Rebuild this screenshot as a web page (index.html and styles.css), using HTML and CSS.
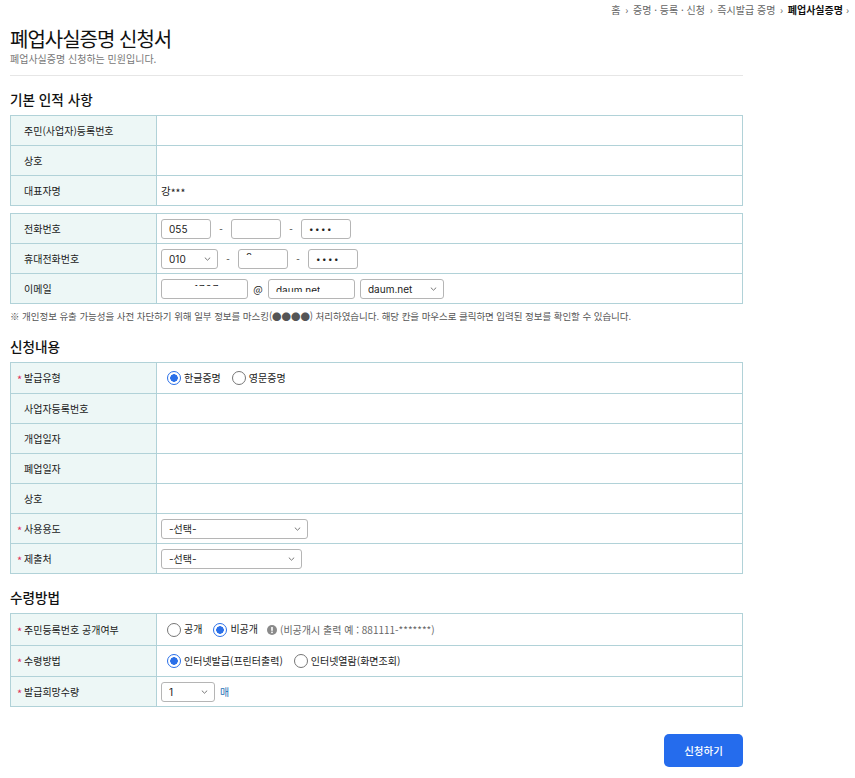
FILE: index.html
```html
<!DOCTYPE html>
<html lang="ko">
<head>
<meta charset="utf-8">
<title>폐업사실증명 신청서</title>
<link rel="stylesheet" href="styles.css">
</head>
<body>
<nav class="crumbs">
  <span>홈</span><i>›</i><span>증명 · 등록 · 신청</span><i>›</i><span>즉시발급 증명</span><i>›</i><b>폐업사실증명</b><i class="tail">›</i>
</nav>
<main class="page">
  <header class="head">
    <h1>폐업사실증명 신청서</h1>
    <p>폐업사실증명 신청하는 민원입니다.</p>
  </header>

  <h2 class="sec sec-first">기본 인적 사항</h2>
  <table class="form">
    <tr><th><span class="lb">주민(사업자)등록번호</span></th><td></td></tr>
    <tr><th><span class="lb">상호</span></th><td></td></tr>
    <tr><th><span class="lb">대표자명</span></th><td class="plain">강<span class="ast">***</span></td></tr>
  </table>

  <table class="form second">
    <tr><th><span class="lb">전화번호</span></th><td><div class="line">
      <span class="field w50">055</span><em>-</em><span class="field w50"></span><em>-</em><span class="field w50 dots">••••</span>
    </div></td></tr>
    <tr><th><span class="lb">휴대전화번호</span></th><td><div class="line">
      <select class="sel w57"><option>010</option></select><em>-</em><span class="field w50"><span class="cut cut-a">2</span></span><em>-</em><span class="field w50 dots">••••</span>
    </div></td></tr>
    <tr><th><span class="lb">이메일</span></th><td><div class="line tight">
      <span class="field w87"><span class="cut cut-b">1707</span></span><u>@</u><span class="field w87"><span class="cut cut-c">daum.net</span></span><select class="sel w84"><option>daum.net</option></select>
    </div></td></tr>
  </table>
  <p class="note">※ 개인정보 유출 가능성을 사전 차단하기 위해 일부 정보를 마스킹(●●●●) 처리하였습니다. 해당 칸을 마우스로 클릭하면 입력된 정보를 확인할 수 있습니다.</p>

  <h2 class="sec sec-two">신청내용</h2>
  <table class="form">
    <tr class="r31"><th class="req"><span class="lb"><s>*</s>발급유형</span></th><td><div class="radios">
      <label><input type="radio" name="a" checked><span>한글증명</span></label><label><input type="radio" name="a"><span>영문증명</span></label>
    </div></td></tr>
    <tr><th><span class="lb">사업자등록번호</span></th><td></td></tr>
    <tr><th><span class="lb">개업일자</span></th><td></td></tr>
    <tr><th><span class="lb">폐업일자</span></th><td></td></tr>
    <tr><th><span class="lb">상호</span></th><td></td></tr>
    <tr><th class="req"><span class="lb"><s>*</s>사용용도</span></th><td><select class="sel w147"><option>-선택-</option></select></td></tr>
    <tr><th class="req"><span class="lb"><s>*</s>제출처</span></th><td><select class="sel w141"><option>-선택-</option></select></td></tr>
  </table>

  <h2 class="sec sec-three">수령방법</h2>
  <table class="form">
    <tr class="r32"><th class="req"><span class="lb"><s>*</s>주민등록번호 공개여부</span></th><td><div class="radios">
      <label><input type="radio" name="b"><span>공개</span></label><label><input type="radio" name="b" checked><span>비공개</span></label>
      <span class="hint"><svg class="info" viewBox="0 0 10 10" width="10" height="10"><circle cx="5" cy="5" r="5" fill="#8a8a8a"/><rect x="4.2" y="2" width="1.6" height="3.8" fill="#fff"/><rect x="4.2" y="6.6" width="1.6" height="1.5" fill="#fff"/></svg>(비공개시 출력 예 : 881111-<span class="ast">*******</span>)</span>
    </div></td></tr>
    <tr class="r31"><th class="req"><span class="lb"><s>*</s>수령방법</span></th><td><div class="radios">
      <label><input type="radio" name="c" checked><span>인터넷발급(프린터출력)</span></label><label><input type="radio" name="c"><span>인터넷열람(화면조회)</span></label>
    </div></td></tr>
    <tr><th class="req"><span class="lb"><s>*</s>발급희망수량</span></th><td><div class="line qty"><select class="sel w54"><option>1</option></select><span class="unit">매</span></div></td></tr>
  </table>

  <div class="actions"><button class="submit" type="button">신청하기</button></div>
</main>
</body>
</html>
```
FILE: styles.css
```css
* { box-sizing: border-box; }
html, body { margin: 0; padding: 0; background: #fff; }
body {
  font-family: "Noto Sans CJK KR", "Noto Sans", sans-serif;
  font-size: 10px;
  color: #1a1a1a;
  height: 778px;
  overflow: hidden;
}
.crumbs {
  display: flex;
  justify-content: flex-end;
  align-items: center;
  height: 18px;
  padding-right: 6px;
  font-size: 10px;
  color: #666;
  white-space: nowrap;
}
.crumbs i { font-style: normal; margin: 0 4.7px; font-size: 10px; }
.crumbs b { color: #111; font-weight: 700; }
.crumbs .tail { margin: 0 0 0 3px; }
.page { width: 743px; padding-left: 10px; }
.head { height: 58px; border-bottom: 1px solid #e6e6e6; padding-top: 9px; }
.head h1 { margin: 0; font-size: 20px; line-height: 24px; font-weight: 400; letter-spacing: -1px; color: #111; }
.head p { margin: 1px 0 0; font-size: 10px; line-height: 14px; color: #777; }
.sec { margin: 0; font-size: 13.6px; font-weight: 500; line-height: 20px; color: #111; }
.sec-first { margin-top: 13px; margin-bottom: 6px; }
.sec-two { margin-top: 13px; margin-bottom: 6px; }
.sec-three { margin-top: 13px; margin-bottom: 6px; }
.form { width: 733px; border-collapse: collapse; table-layout: fixed; }
.form.second { margin-top: 7px; }
.form tr { height: 30px; }
.form tr.r31 { height: 31px; }
.form tr.r32 { height: 32px; }
.form th, .form td { border: 1px solid #b1d2d8; padding: 0 4px; vertical-align: middle; }
.form th {
  width: 146px;
  background: #edf7f6;
  text-align: left;
  font-weight: 400;
  font-size: 10px;
  padding-left: 13px;
  color: #1a1a1a;
}
.form th.req { padding-left: 6px; }
.lb { display: block; margin-bottom: 1px; }
.form th s { text-decoration: none; color: #e0335e; display: inline-block; width: 7px; font-size: 11px; line-height: 1; vertical-align: -2px; }
.ast { vertical-align: -2px; line-height: 1; }
.plain { font-size: 10.5px; }
.line { display: flex; align-items: center; }
.line em { font-style: normal; width: 20px; text-align: center; color: #444; }
.line.tight u { text-decoration: none; width: 20px; text-align: center; font-size: 10px; }
.line.tight .sel { margin-left: 5px; }
.field {
  display: block;
  height: 20px;
  border: 1px solid #b5b5b5;
  border-radius: 3px;
  background: #fff;
  padding: 0 7px;
  font-family: Inter, "Noto Sans CJK KR", sans-serif;
  font-size: 10px;
  line-height: 18px;
  color: #222;
  position: relative;
  overflow: hidden;
}
.w50 { width: 50px; }
.w87 { width: 87px; }
.dots { letter-spacing: 1.5px; font-size: 8px; }
.cut { position: absolute; left: 7px; top: 1px; overflow: hidden; display: block; }
.cut-a { height: 4px; line-height: 13px; }
.cut-b { left: 32px; top: 3px; height: 3px; line-height: 13px; letter-spacing: 1px; }
.cut-c { left: 7px; top: 2px; height: 10px; line-height: 17px; }
.sel {
  display: block;
  height: 20px;
  appearance: none;
  -webkit-appearance: none;
  border: 1px solid #b5b5b5;
  border-radius: 3px;
  background: #fff url("data:image/svg+xml,%3Csvg xmlns='http://www.w3.org/2000/svg' width='7' height='4' viewBox='0 0 7 4'%3E%3Cpath d='M.8.6l2.7 2.6L6.2.6' fill='none' stroke='%23666' stroke-width='.9'/%3E%3C/svg%3E") no-repeat right 6px center;
  padding: 0 7px;
  font-family: Inter, "Noto Sans CJK KR", sans-serif;
  font-size: 10px;
  color: #222;
}
.w57 { width: 57px; }
.w84 { width: 84px; }
.w147 { width: 147px; }
.w141 { width: 141px; }
.w54 { width: 54px; }
.note { margin: 5px 0 0; font-size: 9.5px; letter-spacing: -0.05px; line-height: 14px; color: #555; }
.radios { display: flex; align-items: center; padding-left: 6px; font-size: 10px; }
.radios label { display: flex; align-items: center; margin-right: 11px; }
.radios label span { margin-bottom: 2px; }
.radios input {
  appearance: none;
  -webkit-appearance: none;
  flex: none;
  width: 14px;
  height: 14px;
  margin: 0 3px 0 0;
  border: 1px solid #767676;
  border-radius: 50%;
  background: #fff;
}
.radios input:checked {
  border: 1px solid #2a6fe8;
  background: radial-gradient(circle, #2a6fe8 0 3.5px, #fff 4px);
}
.hint { display: flex; align-items: center; color: #666; font-size: 10px; margin-left: -2px; white-space: pre; }
.info { margin-right: 3px; }
.qty .unit { margin-left: 5px; color: #1a6fb5; font-size: 10px; }
.actions { display: flex; justify-content: flex-end; margin-top: 27px; }
.submit {
  width: 79px;
  height: 33px;
  border: 0;
  border-radius: 5px;
  background: #256ced;
  color: #fff;
  font-family: inherit;
  font-size: 10.5px;
  font-weight: 500;
}
```
